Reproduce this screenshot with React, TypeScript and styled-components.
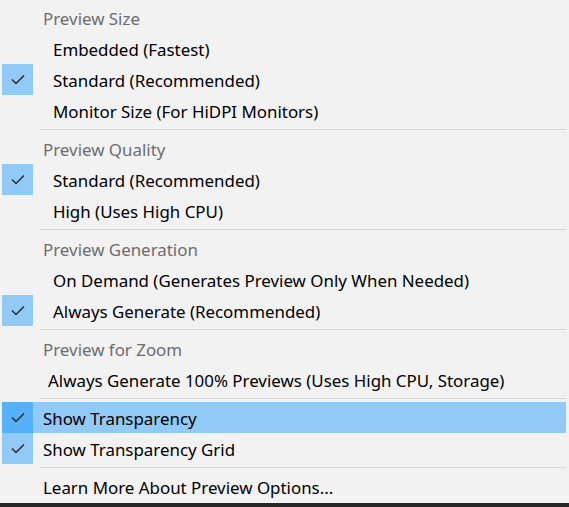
import React from 'react'
import styled, { createGlobalStyle } from 'styled-components'

const GlobalStyle = createGlobalStyle`
  html, body {
    margin: 0;
    padding: 0;
    background: #262626;
  }
  body {
    font-family: 'Noto Sans', 'Open Sans', sans-serif;
  }
`

const Menu = styled.div`
  width: 569px;
  height: 503px;
  box-sizing: border-box;
  padding-top: 2px;
  background: #f2f2f2;
  display: flex;
  flex-direction: column;
  overflow: hidden;
`

const Header = styled.div`
  height: 31px;
  display: flex;
  align-items: center;
  padding: 1px 0 0 43px;
  box-sizing: border-box;
  font-size: 16.9px;
  color: #6d6d6d;
`

const Row = styled.div<{ $active?: boolean }>`
  height: 31px;
  display: flex;
  align-items: center;
  margin: 0 3px 0 2px;
  background: ${(p) => (p.$active ? '#91c9f7' : 'transparent')};
`

const CheckBox = styled.div<{ $checked?: boolean; $active?: boolean }>`
  width: 31px;
  height: 31px;
  flex: none;
  display: flex;
  align-items: center;
  justify-content: center;
  background: ${(p) => (!p.$checked ? 'transparent' : p.$active ? '#56b0fa' : '#91c9f7')};
`

const Label = styled.span<{ $indent: number }>`
  padding: 1px 0 0 ${(p) => p.$indent}px;
  font-size: 16.9px;
  color: #000;
  white-space: nowrap;
`

const Separator = styled.div`
  height: 1px;
  margin: 3px 3px 3px 40px;
  background: #d7d7d7;
`

const Check = () => (
  <svg width="14" height="11" viewBox="0 0 14 11">
    <path d="M1 5.5 L5 9.5 L13 1.5" fill="none" stroke="#2b2b2b" strokeWidth="1.5" />
  </svg>
)

type ItemProps = {
  label: string
  x: number
  checked?: boolean
  active?: boolean
}

// x is the left edge of the label text in the menu
const Item = ({ label, x, checked, active }: ItemProps) => (
  <Row $active={active}>
    <CheckBox $checked={checked} $active={active}>
      {checked && <Check />}
    </CheckBox>
    <Label $indent={x - 33}>{label}</Label>
  </Row>
)

const App = () => {
  return (
    <>
      <GlobalStyle />
      <Menu>
        <Header>Preview Size</Header>
        <Item label="Embedded (Fastest)" x={53} />
        <Item label="Standard (Recommended)" x={53} checked />
        <Item label="Monitor Size (For HiDPI Monitors)" x={53} />
        <Separator />
        <Header>Preview Quality</Header>
        <Item label="Standard (Recommended)" x={53} checked />
        <Item label="High (Uses High CPU)" x={53} />
        <Separator />
        <Header>Preview Generation</Header>
        <Item label="On Demand (Generates Preview Only When Needed)" x={53} />
        <Item label="Always Generate (Recommended)" x={53} checked />
        <Separator />
        <Header>Preview for Zoom</Header>
        <Item label="Always Generate 100% Previews (Uses High CPU, Storage)" x={48} />
        <Separator />
        <Item label="Show Transparency" x={43} checked active />
        <Item label="Show Transparency Grid" x={43} checked />
        <Separator />
        <Item label="Learn More About Preview Options..." x={43} />
      </Menu>
    </>
  )
}

export default App
